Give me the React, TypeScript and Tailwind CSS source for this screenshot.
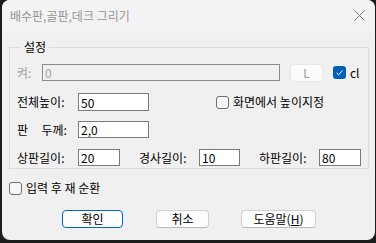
import type { ReactNode } from 'react'

function TextBox({ value, width, disabled = false }: { value: string; width: string; disabled?: boolean }) {
  return (
    <input
      readOnly
      value={value}
      disabled={disabled}
      className={`${width} h-full border px-[2px] text-[12px] leading-none outline-none ${
        disabled ? 'border-[#8c8c8c] bg-[#f0f0f0] text-[#a3a3a3]' : 'border-[#7a7a7a] bg-white text-black'
      }`}
    />
  )
}

function Check({ checked = false, children }: { checked?: boolean; children: ReactNode }) {
  return (
    <label className="flex items-center gap-[4px]">
      {checked ? (
        <span className="w-[13px] h-[13px] rounded-[3px] bg-[#005fb8] flex items-center justify-center">
          <svg width="9" height="9" viewBox="0 0 9 9" fill="none">
            <path d="M1.5 4.8 L3.6 6.8 L7.6 2.4" stroke="white" strokeWidth="1" />
          </svg>
        </span>
      ) : (
        <span className="w-[13px] h-[13px] rounded-[3px] border border-[#6e6e6e] bg-[#f7f7f7]" />
      )}
      <span>{children}</span>
    </label>
  )
}

function Btn({ width, primary = false, children }: { width: string; primary?: boolean; children: ReactNode }) {
  return (
    <button
      type="button"
      className={`${width} h-[18px] rounded-[4px] border bg-[#fdfdfd] text-[12px] leading-none text-black ${
        primary ? 'border-[#0067c0]' : 'border-[#d0d0d0] border-b-[#b8b8b8]'
      }`}
    >
      {children}
    </button>
  )
}

export default function App() {
  return (
    <div className="w-[376px] h-[243px] bg-[#1c1c1c] pl-[2px] font-['Noto_Sans_CJK_KR','Noto_Sans',sans-serif] text-[12px] text-black">
      <div className="w-[373px] h-[240px] rounded-[8px] bg-[#f0f0f0] overflow-hidden flex flex-col">
        {/* title bar */}
        <div className="h-[31px] shrink-0 bg-[#f3f3f3] flex items-center pl-[8px] pr-[10px]">
          <span className="text-[#949494]">배수판,골판,데크 그리기</span>
          <svg className="ml-auto" width="11" height="11" viewBox="0 0 11 11" fill="none">
            <path d="M0.5 0.5 L10.5 10.5 M10.5 0.5 L0.5 10.5" stroke="#7a7a7a" strokeWidth="1" />
          </svg>
        </div>

        {/* group box */}
        <fieldset className="mt-[9px] ml-[7px] mr-[6px] border border-[#dcdcdc] pl-[7px] pt-[10px] pb-[2px] flex flex-col">
          <legend className="ml-[4px] px-[3px] leading-[14px]">설정</legend>

          <div className="flex items-center h-[17px]">
            <span className="w-[25px] text-[#a3a3a3]">켜:</span>
            <TextBox value="0" width="w-[238px]" disabled />
            <span className="ml-[10px] w-[33px] h-[18px] rounded-[4px] border border-[#e8e8e8] bg-[#fbfbfb] text-[#9a9a9a] flex items-center justify-center">L</span>
            <span className="ml-[10px]">
              <Check checked>cl</Check>
            </span>
          </div>

          <div className="flex items-center h-[18px] mt-[12px]">
            <span className="w-[61px]">전체높이:</span>
            <TextBox value="50" width="w-[71px]" />
            <span className="ml-[67px]">
              <Check>화면에서 높이지정</Check>
            </span>
          </div>

          <div className="flex items-center h-[17px] mt-[10px]">
            <span className="w-[61px] whitespace-pre">판     두께:</span>
            <TextBox value="2,0" width="w-[71px]" />
          </div>

          <div className="flex items-center h-[17px] mt-[11px]">
            <span className="w-[61px]">상판길이:</span>
            <TextBox value="20" width="w-[42px]" />
            <span className="ml-[19px] w-[60px]">경사길이:</span>
            <TextBox value="10" width="w-[41px]" />
            <span className="ml-[19px] w-[60px]">하판길이:</span>
            <TextBox value="80" width="w-[42px]" />
          </div>
        </fieldset>

        <div className="mt-[10px] ml-[7px]">
          <Check>입력 후 재 순환</Check>
        </div>

        <div className="mt-[13px] flex items-center pl-[60px]">
          <Btn width="w-[61px]" primary>확인</Btn>
          <span className="ml-[33px]">
            <Btn width="w-[53px]">취소</Btn>
          </span>
          <span className="ml-[32px]">
            <Btn width="w-[75px]">
              도움말(<span className="underline">H</span>)
            </Btn>
          </span>
        </div>
      </div>
    </div>
  )
}
